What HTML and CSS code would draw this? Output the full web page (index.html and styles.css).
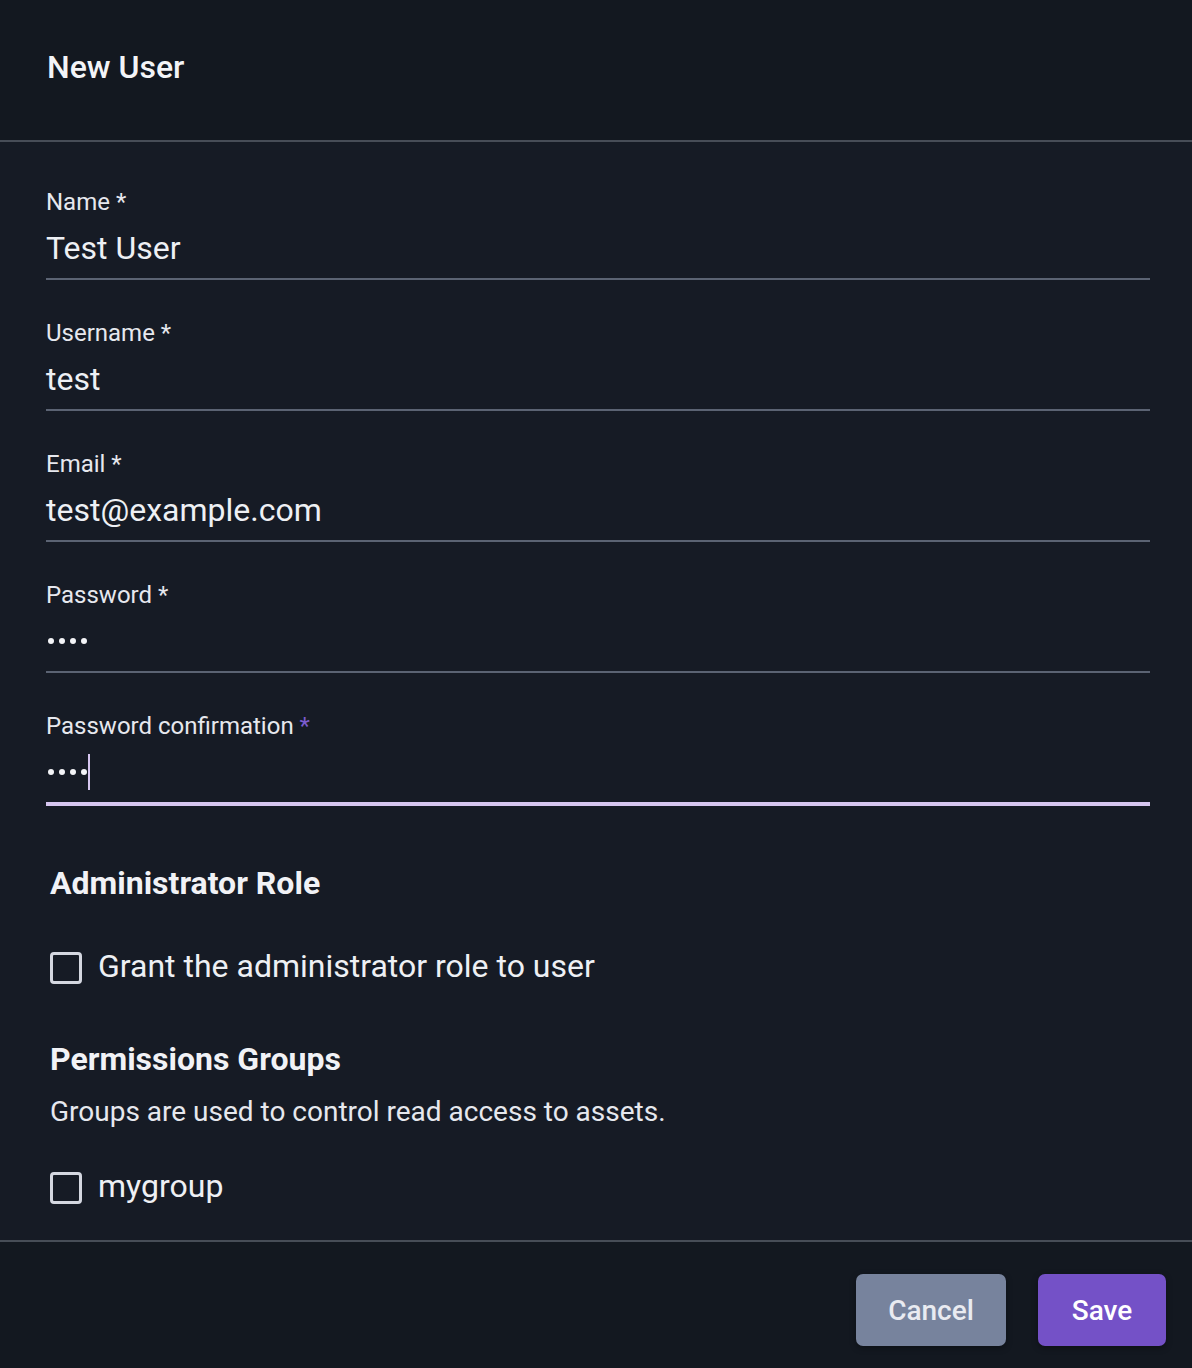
FILE: index.html
```html
<!DOCTYPE html>
<html lang="en">
<head>
<meta charset="utf-8">
<title>New User</title>
<link rel="stylesheet" href="styles.css">
</head>
<body>
<div class="dialog">
  <header class="dialog-header">
    <h1 class="dialog-title">New User</h1>
  </header>
  <main class="dialog-body">
    <div class="field">
      <label class="field-label">Name *</label>
      <div class="field-input">Test User</div>
    </div>
    <div class="field">
      <label class="field-label">Username *</label>
      <div class="field-input">test</div>
    </div>
    <div class="field">
      <label class="field-label">Email *</label>
      <div class="field-input">test@example.com</div>
    </div>
    <div class="field">
      <label class="field-label">Password *</label>
      <div class="field-input"><span class="dots"><i></i><i></i><i></i><i></i></span></div>
    </div>
    <div class="field field-focused">
      <label class="field-label">Password confirmation <span class="req">*</span></label>
      <div class="field-input"><span class="dots"><i></i><i></i><i></i><i></i></span><span class="caret"></span></div>
    </div>

    <section class="section section-admin">
      <h2 class="section-title">Administrator Role</h2>
      <label class="check-row check-admin"><span class="checkbox"></span><span class="check-text">Grant the administrator role to user</span></label>
    </section>

    <section class="section section-groups">
      <h2 class="section-title">Permissions Groups</h2>
      <p class="section-desc">Groups are used to control read access to assets.</p>
      <label class="check-row check-group"><span class="checkbox"></span><span class="check-text">mygroup</span></label>
    </section>
  </main>
  <footer class="dialog-footer">
    <button class="btn btn-cancel">Cancel</button>
    <button class="btn btn-save">Save</button>
  </footer>
</div>
</body>
</html>
```
FILE: styles.css
```css
* { box-sizing: border-box; }
html, body { margin: 0; padding: 0; }
body {
  background: #151a23;
  font-family: Roboto, "Liberation Sans", sans-serif;
  color: #eef0f4;
  width: 1192px;
  height: 1368px;
  overflow: hidden;
}
.dialog { display: flex; flex-direction: column; height: 1368px; }
.dialog-header {
  height: 142px;
  background: #131820;
  border-bottom: 2px solid #474d57;
  padding: 47px 0 0 47px;
}
.dialog-title {
  margin: 0;
  font-size: 32px;
  line-height: 40px;
  font-weight: 500;
  color: #f3f4f7;
}
.dialog-body {
  flex: 1;
  padding: 47px 42px 0 46px;
  background: #161b25;
}
.field { margin-bottom: 40px; }
.field-label {
  display: block;
  font-size: 24px;
  line-height: 26px;
  color: #e6e8ee;
}
.req { color: #7c5ccf; }
.field-input {
  position: relative;
  display: flex;
  align-items: center;
  padding: 13px 0 10px 0;
  height: 65px;
  font-size: 32px;
  line-height: 40px;
  color: #eef0f4;
  border-bottom: 2px solid #5b6373;
}
.field-focused .field-input { border-bottom: 4px solid #d6c6f0; height: 67px; }
.dots { display: inline-flex; gap: 5px; padding-left: 2px; }
.dots i {
  display: block;
  width: 6px;
  height: 6px;
  border-radius: 50%;
  background: #f3f4f7;
}
.caret {
  display: block;
  width: 2px;
  height: 36px;
  margin-left: 1px;
  background: #d6c6f0;
}
.section { padding-left: 4px; }
.section-admin { margin-top: 59px; }
.section-title {
  margin: 0;
  font-size: 32px;
  line-height: 36px;
  font-weight: 700;
  color: #f1f2f6;
}
.check-row { display: flex; align-items: center; gap: 16px; height: 32px; }
.check-admin { margin-top: 51px; }
.checkbox {
  display: block;
  flex: none;
  width: 32px;
  height: 32px;
  border: 3.5px solid #d4d7e0;
  border-radius: 4px;
}
.check-text { font-size: 32px; line-height: 40px; padding-bottom: 5px; color: #eef0f4; }
.section-groups { margin-top: 57px; }
.section-desc {
  margin: 18px 0 0 0;
  font-size: 28px;
  line-height: 34px;
  color: #e6e8ee;
}
.check-group { margin-top: 43px; }
.dialog-footer {
  height: 128px;
  background: #131820;
  border-top: 2px solid #474d57;
  display: flex;
  justify-content: flex-end;
  align-items: flex-start;
  gap: 32px;
  padding: 32px 26px 0 0;
}
.btn {
  height: 72px;
  border: none;
  border-radius: 7px;
  font-family: Roboto, "Liberation Sans", sans-serif;
  font-size: 28px;
  font-weight: 500;
  box-shadow: 0 2px 6px rgba(0,0,0,0.35);
}
.btn-cancel { width: 150px; background: #77839d; color: #e9ebf1; }
.btn-save { width: 128px; background: #7451c7; color: #ffffff; }
```
